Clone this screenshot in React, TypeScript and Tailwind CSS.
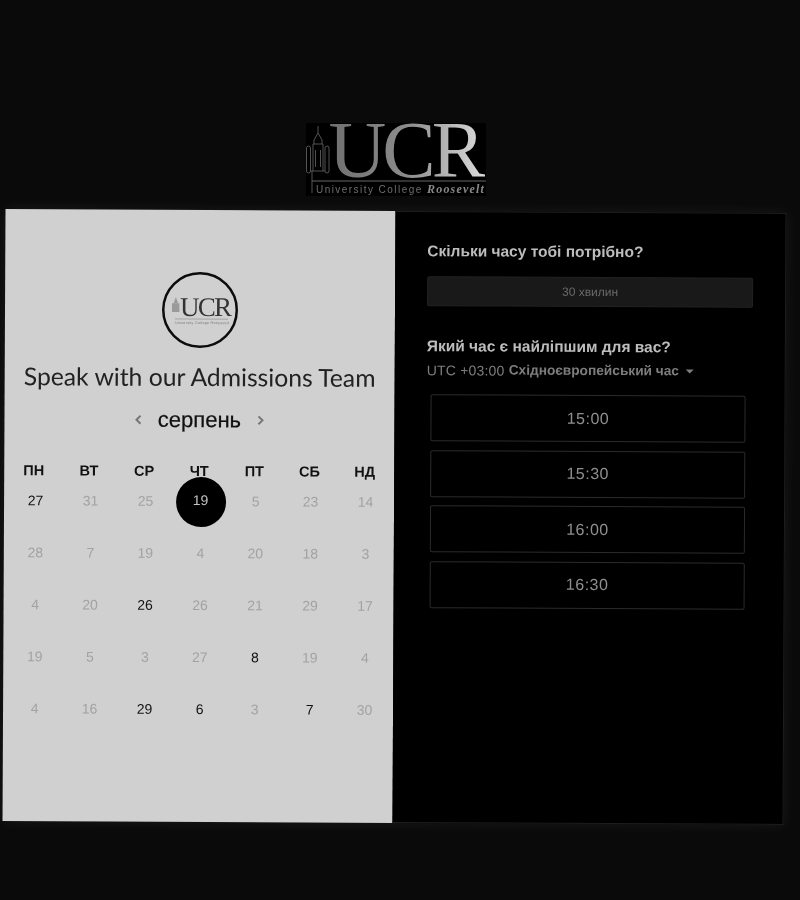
const weekdays = ["ПН", "ВТ", "СР", "ЧТ", "ПТ", "СБ", "НД"];
type Day = { n: number; on?: boolean; sel?: boolean };
const rows: Day[][] = [
  [{ n: 27, on: true }, { n: 31 }, { n: 25 }, { n: 19, sel: true }, { n: 5 }, { n: 23 }, { n: 14 }],
  [{ n: 28 }, { n: 7 }, { n: 19 }, { n: 4 }, { n: 20 }, { n: 18 }, { n: 3 }],
  [{ n: 4 }, { n: 20 }, { n: 26, on: true }, { n: 26 }, { n: 21 }, { n: 29 }, { n: 17 }],
  [{ n: 19 }, { n: 5 }, { n: 3 }, { n: 27 }, { n: 8, on: true }, { n: 19 }, { n: 4 }],
  [{ n: 4 }, { n: 16 }, { n: 29, on: true }, { n: 6, on: true }, { n: 3 }, { n: 7, on: true }, { n: 30 }],
];
const times = ["15:00", "15:30", "16:00", "16:30"];

function Tower({ stroke }: { stroke: string }) {
  return (
    <g fill="none" stroke={stroke} strokeWidth="0.9">
      <path d="M12 3V10L8 17V21M12 10L16 17V21M7 21H17" />
      <rect x="0.5" y="23" width="4" height="27" rx="2" />
      <rect x="19" y="23" width="4" height="27" rx="2" />
      <path d="M7 21V48M17 21V48M9.5 27V44M14.5 27V44M4.5 48H19M6 48V70" />
    </g>
  );
}

function BigLogo() {
  return (
    <svg width="180" height="73" viewBox="0 0 180 73" className="block overflow-visible">
      <defs>
        <linearGradient id="ucrGrad" x1="0" x2="1" y1="0" y2="0">
          <stop offset="0" stopColor="#6f6f6f" />
          <stop offset="0.5" stopColor="#8c8c8c" />
          <stop offset="1" stopColor="#dddddd" />
        </linearGradient>
      </defs>
      <rect width="180" height="73" fill="#000" />
      <Tower stroke="#5c5c5c" />
      <text x="22.5" y="54" fontFamily="'Liberation Serif', serif" fontSize="80" letterSpacing="-4" fill="url(#ucrGrad)">
        UCR
      </text>
      <path d="M6 58H180" stroke="#666" strokeWidth="1" />
      <text x="10" y="70" fontFamily="'Liberation Sans', sans-serif" fontSize="10" letterSpacing="1.45" fill="#6e6e6e">
        University College
      </text>
      <text x="121" y="70" fontFamily="'Liberation Serif', serif" fontStyle="italic" fontWeight="700" fontSize="12" letterSpacing="1.2" fill="#8a8a8a">
        Roosevelt
      </text>
    </svg>
  );
}

function SmallLogo() {
  return (
    <svg width="76" height="76" viewBox="0 0 76 76" className="block overflow-visible">
      <circle cx="38" cy="38" r="36.75" fill="none" stroke="#0c0c0c" strokeWidth="2.5" />
      <g transform="translate(10 24) scale(0.32)">
        <g fill="#9a9a9a">
          <rect x="0" y="23" width="23" height="27" />
          <path d="M12 3L19 23H5Z" />
        </g>
      </g>
      <text x="18" y="44" fontFamily="'Liberation Serif', serif" fontSize="27" letterSpacing="-1.8" fill="#333">
        UCR
      </text>
      <path d="M13 47H66" stroke="#777" strokeWidth="0.5" />
      <text x="13" y="52" fontFamily="'Liberation Sans', sans-serif" fontSize="3.6" letterSpacing="0.3" fill="#777">
        University College Roosevelt
      </text>
    </svg>
  );
}

export default function App() {
  return (
    <div className="min-h-[900px] w-[800px] overflow-hidden bg-[#0a0a0a] pt-[123px] font-['Liberation_Sans',sans-serif] grayscale blur-[0.35px]">
      <div className="ml-[306px] w-[180px]">
        <BigLogo />
      </div>
      <div className="ml-[3.5px] mt-[14.75px] flex h-[612px] w-[781px] rotate-[0.28deg] shadow-[0_0_14px_rgba(255,255,255,0.07)]">
        <section className="w-[390px] bg-[#d0d0d0] pt-[62px] text-[#111]">
          <div className="flex justify-center">
            <SmallLogo />
          </div>
          <h1 className="mt-[13.5px] text-center font-['Lato',sans-serif] text-[24.7px] leading-[30px] font-normal whitespace-nowrap text-[#222]">
            Speak with our Admissions Team
          </h1>
          <div className="mt-[14.5px] flex h-[28px] items-center justify-center gap-[14px]">
            <svg width="10" height="12" viewBox="0 0 10 12" className="text-[#777]">
              <path d="M7 2L3 6L7 10" fill="none" stroke="currentColor" strokeWidth="2" />
            </svg>
            <span className="text-[22px] leading-[28px] text-[#111] [-webkit-text-stroke:0.25px_#111]">серпень</span>
            <svg width="10" height="12" viewBox="0 0 10 12" className="text-[#777]">
              <path d="M3 2L7 6L3 10" fill="none" stroke="currentColor" strokeWidth="2" />
            </svg>
          </div>
          <div className="mt-[27px] grid grid-cols-7 px-[2px]">
            {weekdays.map((d) => (
              <div key={d} className="h-[20px] text-center text-[14.5px] leading-[20px] font-bold text-[#111]">
                {d}
              </div>
            ))}
          </div>
          <div className="mt-[-5.5px] grid grid-cols-7 grid-rows-5 pl-[4px] pr-[1px]">
            {rows.flat().map((d, i) => (
              <div key={i} className="flex h-[52px] items-center justify-center text-[14px]">
                {d.sel ? (
                  <span className="relative flex h-[50px] w-[50px] items-center justify-center rounded-full bg-black pb-[3px] text-[#c4c4c4]">
                    {d.n}
                  </span>
                ) : (
                  <span className={d.on ? "text-[#111]" : "text-[#a2a2a2]"}>{d.n}</span>
                )}
              </div>
            ))}
          </div>
        </section>
        <section className="w-[391px] border border-l-0 border-[#1d1d1d] bg-black pt-[29px] pl-[32px] pr-[32px]">
          <h2 className="text-[15.5px] leading-[20px] font-bold text-[#bdbdbd]">Скільки часу тобі потрібно?</h2>
          <div className="mt-[14.5px] flex h-[30px] items-center justify-center rounded-[2px] border border-[#222] bg-[#191919] text-[12px] text-[#6a6a6a]">
            30 хвилин
          </div>
          <h2 className="mt-[30px] text-[15.5px] leading-[20px] font-bold text-[#bdbdbd]">Який час є найліпшим для вас?</h2>
          <div className="mt-[4.5px] flex items-center text-[14px] leading-[20px] text-[#7d7d7d]">
            <span className="tracking-[0.2px]">UTC +03:00&nbsp;</span>
            <span className="text-[13.7px] font-bold">Східноєвропейський час</span>
            <span className="ml-[7px] h-0 w-0 border-x-[4px] border-t-[4px] border-x-transparent border-t-[#7d7d7d]" />
          </div>
          <div className="mt-[14px] ml-[4px] flex w-[315px] flex-col gap-[8.5px]">
            {times.map((t) => (
              <div key={t} className="flex h-[47px] items-center justify-center rounded-[2px] border border-[#2b2b2b] text-[16px] tracking-[0.5px] text-[#8f8f8f]">
                {t}
              </div>
            ))}
          </div>
        </section>
      </div>
    </div>
  );
}
